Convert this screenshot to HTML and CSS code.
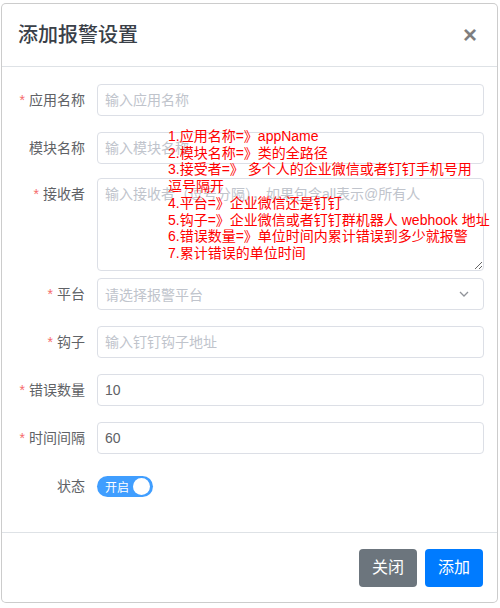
FILE: index.html
```html
<!DOCTYPE html>
<html lang="zh-CN">
<head>
  <meta charset="UTF-8" />
  <meta name="viewport" content="width=device-width, initial-scale=1.0"/>
  <title>添加报警设置</title>
  <link rel="stylesheet" href="styles.css">
</head>
<body>
  <div class="modal">
    <div class="modal-header">
      <h5 class="modal-title">添加报警设置</h5>
      <button type="button" class="close">&times;</button>
    </div>

    <div class="modal-body">
      <form class="alarm-form">
        <div class="form-item">
          <label class="form-label"><span class="req">*</span>应用名称</label>
          <input class="form-input" type="text" placeholder="输入应用名称" />
        </div>

        <div class="form-item item-before-area">
          <label class="form-label">模块名称</label>
          <input class="form-input" type="text" placeholder="输入模块名称" />
        </div>

        <div class="form-item item-area">
          <label class="form-label"><span class="req">*</span>接收者</label>
          <textarea class="form-textarea" placeholder="输入接收者（逗号分隔），如果包含all表示@所有人"></textarea>
        </div>

        <div class="form-item">
          <label class="form-label"><span class="req">*</span>平台</label>
          <div class="form-select">
            <span class="select-placeholder">请选择报警平台</span>
            <svg class="select-arrow" width="10" height="6" viewBox="0 0 10 6">
              <polyline points="1,1 5,5 9,1" fill="none" stroke="#909399" stroke-width="1.3"/>
            </svg>
          </div>
        </div>

        <div class="form-item">
          <label class="form-label"><span class="req">*</span>钩子</label>
          <input class="form-input" type="text" placeholder="输入钉钉钩子地址" />
        </div>

        <div class="form-item">
          <label class="form-label"><span class="req">*</span>错误数量</label>
          <input class="form-input" type="text" value="10" />
        </div>

        <div class="form-item">
          <label class="form-label"><span class="req">*</span>时间间隔</label>
          <input class="form-input" type="text" value="60" />
        </div>

        <div class="form-item item-last">
          <label class="form-label">状态</label>
          <div class="switch">
            <span class="switch-text">开启</span>
            <span class="switch-knob"></span>
          </div>
        </div>
      </form>
    </div>

    <div class="modal-footer">
      <button type="button" class="btn btn-secondary">关闭</button>
      <button type="button" class="btn btn-primary">添加</button>
    </div>

    <!-- field notes shown over the form -->
    <div class="notes">1.应用名称=》appName<br>2.模块名称=》类的全路径<br>3.接受者=》 多个人的企业微信或者钉钉手机号用<br>逗号隔开<br>4.平台=》企业微信还是钉钉<br>5.钩子=》企业微信或者钉钉群机器人 webhook 地址<br>6.错误数量=》单位时间内累计错误到多少就报警<br>7.累计错误的单位时间</div>
  </div>
</body>
</html>
```

FILE: styles.css
```css
* {
  box-sizing: border-box;
}

body {
  margin: 0;
  background: #fff;
  font-family: "Liberation Sans", "Noto Sans CJK SC", sans-serif;
  color: #212529;
}

.modal {
  position: relative;
  width: 497px;
  margin: 3px 0 0 1px;
  border: 1px solid rgba(0, 0, 0, 0.2);
  border-radius: 5px;
  background: #fff;
}

.modal-header {
  display: flex;
  justify-content: space-between;
  align-items: center;
  padding: 16px;
  border-bottom: 1px solid #dee2e6;
}

.modal-title {
  margin: 0;
  font-size: 20px;
  font-weight: 500;
  line-height: 30px;
  color: #3a4048;
}

.close {
  background: none;
  border: none;
  padding: 0 4px 0 0;
  font-family: "Liberation Sans", sans-serif;
  font-size: 24px;
  font-weight: 700;
  line-height: 30px;
  color: #000;
  opacity: 0.5;
}

.modal-body {
  padding: 17px 13px 30px 15px;
}

.form-item {
  display: flex;
  align-items: center;
  margin-bottom: 16px;
}

.item-before-area {
  margin-bottom: 14px;
}

.item-area {
  align-items: flex-start;
  margin-bottom: 7px;
}

.item-last {
  margin-bottom: 0;
}

.form-label {
  width: 80px;
  flex-shrink: 0;
  padding-right: 12px;
  text-align: right;
  font-size: 14px;
  line-height: 32px;
  color: #606266;
}

.req {
  color: #f56c6c;
  margin-right: 4px;
}

.form-input,
.form-textarea,
.form-select {
  flex: 1;
  border: 1px solid #dcdfe6;
  border-radius: 4px;
  font-family: "Liberation Sans", "Noto Sans CJK SC", sans-serif;
  font-size: 14px;
  color: #606266;
  background: #fff;
}

.form-input {
  height: 32px;
  padding: 0 7px;
}

.form-textarea {
  height: 93px;
  padding: 5px 7px;
  line-height: 21px;
  resize: vertical;
}

.form-input::placeholder,
.form-textarea::placeholder {
  color: #c0c4cc;
}

.form-select {
  display: flex;
  justify-content: space-between;
  align-items: center;
  height: 32px;
  padding: 0 14px 0 7px;
}

.select-placeholder {
  color: #c0c4cc;
}

.switch {
  position: relative;
  display: flex;
  align-items: center;
  width: 56px;
  height: 21px;
  border-radius: 11px;
  background: #409eff;
}

.switch-text {
  padding-left: 8px;
  font-size: 12px;
  color: #fff;
}

.switch-knob {
  position: absolute;
  top: 2px;
  right: 3px;
  width: 17px;
  height: 17px;
  border-radius: 50%;
  background: #fff;
}

.modal-footer {
  display: flex;
  justify-content: flex-end;
  gap: 8px;
  padding: 16px 14px 15px;
  border-top: 1px solid #dee2e6;
}

.btn {
  padding: 6px 12px;
  border: 1px solid transparent;
  border-radius: 4px;
  font-family: "Liberation Sans", "Noto Sans CJK SC", sans-serif;
  font-size: 16px;
  line-height: 24px;
  color: #fff;
}

.btn-secondary {
  background: #6c757d;
}

.btn-primary {
  background: #007bff;
}

.notes {
  position: absolute;
  top: 124px;
  left: 166px;
  font-family: "Liberation Sans", "Noto Sans CJK SC", sans-serif;
  font-size: 14px;
  line-height: 16.7px;
  color: #ff0000;
  white-space: nowrap;
}
```
